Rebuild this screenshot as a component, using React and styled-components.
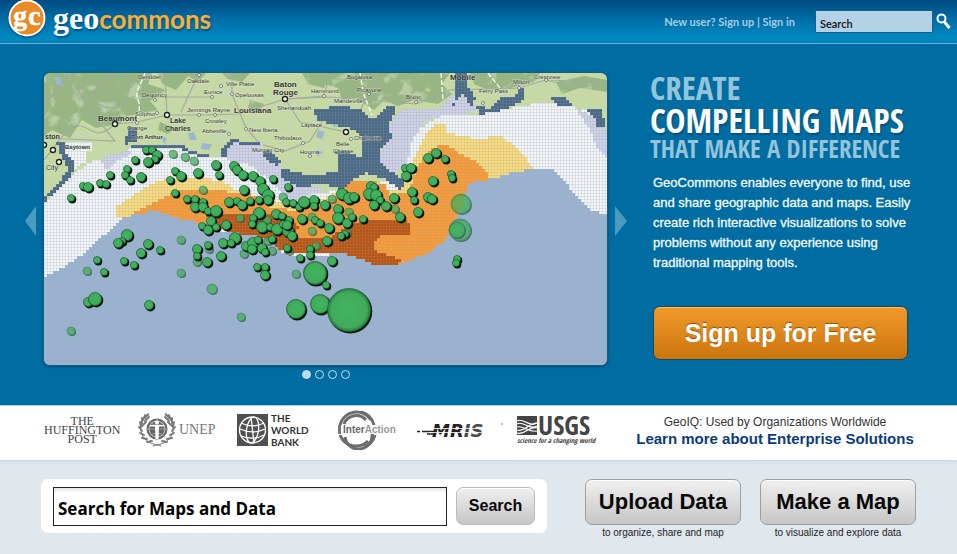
import React from "react";
import styled, { createGlobalStyle } from "styled-components";

const sans = `"Liberation Sans", Arial, sans-serif`;
const humanist = `"Lato", "Open Sans", sans-serif`;
const narrow = `"Open Sans Condensed", "Roboto Condensed", "Liberation Sans Narrow", "DejaVu Sans Condensed", sans-serif`;

const GlobalStyle = createGlobalStyle`
  *, *::before, *::after { box-sizing: border-box; }
  html, body { margin: 0; background: #e0e8ee; }
  body { font-family: ${sans}; color: #111; min-height: 100vh; }
  button, input { font: inherit; }
  button { cursor: pointer; }
  a { color: inherit; text-decoration: none; }
`;

/* ---------- header ---------- */

const Header = styled.header`
  display: flex;
  align-items: center;
  justify-content: space-between;
  height: 44px;
  padding: 0 6px 0 8px;
  background: linear-gradient(#004a80 0%, #006aa3 40%, #0089c0 88%, #0084b9 100%);
  border-bottom: 1px solid #6cabd6;
`;

const Brand = styled.a`
  display: flex;
  align-items: flex-start;
  height: 43px;
  gap: 7px;
`;

const BrandMark = styled.svg`
  display: block;
  filter: drop-shadow(0 1px 1px #00406a);
`;

const Wordmark = styled.span`
  font: 700 26px/38px ${humanist};
  color: #fcae34;
  text-shadow: 1px 2px 2px #005480;
`;

const WordmarkGeo = styled.span`
  font: 700 32px/34px "Liberation Serif", serif;
  color: #fff;
`;

const HeaderTools = styled.div`
  display: flex;
  align-items: center;
  gap: 20px;
`;

const AccountLinks = styled.nav`
  font: 700 11px/16px ${humanist};
  color: #a7cde3;
`;

const HeaderSearch = styled.form`
  display: flex;
  align-items: center;
  gap: 3px;
`;

const HeaderInput = styled.input`
  width: 118px;
  height: 23px;
  padding: 3px 4px 0;
  border: 1px solid #1d5f8c;
  border-radius: 1px;
  background: #b3d2e6;
  color: #111;
  font: 600 11px/16px ${humanist};
`;

const IconButton = styled.button`
  display: flex;
  padding: 0;
  border: 0;
  background: none;
`;

/* ---------- hero ---------- */

const Hero = styled.main`
  display: grid;
  grid-template-columns: 11px minmax(0, 1fr) 12px 323px;
  column-gap: 7px;
  padding: 28px 0 18px 25px;
  background: #006da2;
  border-bottom: 1px solid #a8cfe2;
`;

const Arrow = styled.button`
  align-self: center;
  display: flex;
  height: 30px;
  margin-bottom: 18px;
  padding: 0;
  border: 0;
  background: none;
  color: #4c9abf;
`;

const Carousel = styled.section`
  display: flex;
  flex-direction: column;
  align-items: center;
`;

const MapFrame = styled.div`
  width: 100%;
  overflow: hidden;
  border: 1px solid #185c82;
  border-radius: 7px;
  box-shadow: 0 1px 3px #004a75;
`;

const MapArt = styled.svg`
  display: block;
  width: 100%;
  height: auto;
`;

const Dots = styled.div`
  display: flex;
  gap: 4px;
  padding: 4px 0 8px;
`;

const Dot = styled.button`
  width: 9px;
  height: 9px;
  padding: 0;
  border: 1px solid #c5dfec;
  border-radius: 50%;
  background: ${(p) => (p.$active ? "#b9d9e9" : "transparent")};
`;

const Pitch = styled.section`
  padding: 0 40px 0 16px;
`;

const Headline = styled.h1`
  margin: 0;
  font-family: ${narrow};
  font-weight: 700;
  color: #94c3da;
  white-space: nowrap;
`;

const HeadlineRow = styled.span`
  display: block;
  font-size: ${(p) => p.$size}px;
  line-height: ${(p) => p.$line}px;
  color: ${(p) => (p.$strong ? "#fff" : "inherit")};
  text-shadow: ${(p) => (p.$strong ? "1px 2px 2px #00507c" : "none")};
`;

const Blurb = styled.p`
  margin: 13px 0 33px 3px;
  color: #f4fafd;
  font: 13px/20px ${sans};
  -webkit-text-stroke: 0.3px #f4fafd;
  white-space: nowrap;
`;

const SignUp = styled.button`
  width: 255px;
  height: 54px;
  margin-left: 3px;
  border: 1px solid #20465a;
  border-radius: 7px;
  background: linear-gradient(#f19a29, #cb750f);
  box-shadow: inset 0 1px 0 #f8bd6e;
  color: #fff;
  font: 700 25px/30px ${sans};
  text-shadow: 0 -1px 1px #8f5108;
`;

/* ---------- partners ---------- */

const Partners = styled.section`
  display: grid;
  grid-template-columns: minmax(0, 549fr) minmax(0, 364fr);
  align-items: start;
  height: 55px;
  padding-left: 44px;
  background: #fff;
  border-bottom: 1px solid #c9dce5;
`;

const LogoRow = styled.div`
  display: grid;
  grid-template-columns: 94fr 99fr 100fr 80fr 98fr 78fr;
  align-items: start;
  color: #555;
`;

const Logo = styled.div`
  display: flex;
  align-items: center;
  gap: 3px;
  min-width: 0;
  height: 48px;
  white-space: nowrap;
`;

const HuffText = styled.span`
  font: 12px/9px "Liberation Serif", serif;
  color: #444;
  text-align: center;
`;

const UnepText = styled.span`
  font: 14px/16px "Liberation Serif", serif;
  color: #777;
`;

const BankText = styled.span`
  font: 700 10px/12px ${humanist};
  color: #333;
`;

const LogoArt = styled.svg`
  display: block;
  flex: none;
`;

const Enterprise = styled.div`
  padding: 8px 0 0;
  text-align: center;
  font: 12px/16px ${sans};
  color: #333;
  white-space: nowrap;
`;

const EnterpriseLink = styled.a`
  display: block;
  color: #0c3a7d;
  font: 700 15px/17px ${sans};
`;

/* ---------- actions ---------- */

const Actions = styled.section`
  display: flex;
  align-items: flex-start;
  gap: 38px;
  padding: 18px 41px 16px;
  background: linear-gradient(#d5e1e8, #e0e8ee 5px);
`;

const SearchPanel = styled.form`
  display: flex;
  flex: 1;
  gap: 9px;
  padding: 8px 12px 7px;
  border-radius: 7px;
  background: #fff;
`;

const SearchInput = styled.input`
  flex: 1;
  min-width: 0;
  height: 39px;
  padding: 3px 4px 0;
  border: 1px solid #222;
  border-radius: 0;
  background: linear-gradient(#e2e2e2, #fff 5px);
  color: #000;
  font: 700 17px/24px "Open Sans", "Noto Sans", sans-serif;
`;

const GreyButton = styled.button`
  width: ${(p) => (p.$large ? 156 : 79)}px;
  height: ${(p) => (p.$large ? 46 : 38)}px;
  padding: 0;
  border: 1px solid ${(p) => (p.$large ? "#999fa3" : "#bbb")};
  border-radius: 7px;
  background: linear-gradient(#f0f0f0, #c6c6c6);
  box-shadow: inset 0 1px 0 #fff;
  color: #080808;
  font: 700 ${(p) => (p.$large ? 22 : 16)}px/24px ${sans};
  white-space: nowrap;
`;

const ActionGroup = styled.div`
  display: flex;
  gap: 19px;
`;

const Action = styled.div`
  display: flex;
  flex-direction: column;
  align-items: center;
  gap: 1px;
  font: 10px/14px ${sans};
  color: #222;
`;

/* ---------- map data ---------- */

const MAP = { x: 44, y: 73, w: 563, h: 292 };
const CELL = 3;

const layers = [
  ["#f3f5f9", "44,203 54,192 70,176 86,163 102,157 124,152 134,145 178,144 200,154 228,158 250,165 285,178 300,196 360,186 402,178 404,150 418,128 440,116 478,114 506,108 545,101 590,110 607,135 607,370 44,370"],
  ["#f3f5f9", "64,143 92,143 90,152 84,150 86,160 74,168 66,156"],
  ["#d0d2e7", "100,158 136,148 128,156 112,162 110,170 104,168"],
  ["#d0d2e7", "222,154 232,140 262,143 264,150 276,158 282,168 282,176 300,186 322,186 322,190 300,198 290,206 280,190 262,174 246,162 234,164"],
  ["#d0d2e7", "378,163 382,145 392,120 400,110 438,108 455,92 472,100 476,112 440,116 426,120 412,138 406,164 392,176"],
  ["#d0d2e7", "575,108 592,116 607,132 607,157 598,150 590,130"],
  ["#4a6986", "313,109 328,109 330,105 350,105 352,109 362,109 372,119 388,106 396,106 388,127 392,138 380,148 380,162 388,170 402,178 414,187 402,191 384,178 366,172 352,180 345,194 336,187 322,183 298,187 282,178 282,170 290,170 312,176 338,170 336,152 346,150 362,158 360,135 350,128 318,120"],
  ["#4a6986", "455,73 468,73 468,86 476,98 470,106 462,93 452,106 456,92"],
  ["#4a6986", "474,104 490,108 500,98 516,95 518,88 524,88 524,100 508,108 480,114"],
  ["#4a6986", "550,96 566,97 572,106 560,106"],
  ["#4a6986", "583,108 600,108 606,126 597,126 592,114"],
  ["#4a6986", "128,128 137,128 137,141 124,144"],
  ["#4a6986", "57,143 64,143 66,152 72,160 74,170 60,188 46,198 44,203 44,195 60,180 68,168 62,158"],
  ["#4a6986", "130,144 180,143 190,150 208,155 208,158 188,152 176,147 130,147"],
  ["#4a6986", "219,156 224,144 234,138 240,138 228,148 226,158"],
  ["#4a6986", "238,142 260,142 262,146 240,146"],
  ["#4a6986", "262,152 272,152 280,162 276,166 266,158"],
  ["#fbdc7d", "117,216 116,206 132,196 146,186 166,178 192,176 220,180 240,192 268,198 292,206 318,200 346,188 400,190 413,158 425,134 436,123 446,124 446,132 474,138 500,136 518,148 526,158 533,170 490,180 464,188 300,230 130,222"],
  ["#fb9b34", "126,217 142,208 158,200 176,191 216,190 250,193 270,206 292,210 320,204 336,196 350,182 366,180 386,184 388,196 408,192 416,168 428,150 438,145 450,146 462,154 478,162 487,172 487,181 466,184 466,202 454,228 444,240 430,252 412,259 398,264 372,260 340,254 290,250 250,232 180,220"],
  ["#bd540e", "205,213 250,212 284,216 298,226 290,236 330,238 344,226 366,218 408,221 411,234 382,233 375,241 375,250 402,260 394,265 372,263 350,256 340,254 288,254 258,238 232,232 212,224"],
  ["#9ab2cd", "44,277 60,269 84,253 104,234 120,219 136,213 156,211 170,215 184,220 206,222 218,230 240,233 262,237 276,247 286,254 310,255 345,253 362,259 374,264 400,263 414,258 430,252 446,238 452,224 464,202 466,183 488,179 510,173 530,169 554,169 562,177 574,194 590,210 607,214 607,370 44,370"],
].map(([fill, pts]) => [fill, pts.split(" ").map((p) => p.split(",").map(Number))]);

function inside(x, y, poly) {
  let hit = false;
  for (let i = 0, j = poly.length - 1; i < poly.length; j = i++) {
    const [xi, yi] = poly[i];
    const [xj, yj] = poly[j];
    if (yi > y !== yj > y && x < ((xj - xi) * (y - yi)) / (yj - yi) + xi) hit = !hit;
  }
  return hit;
}

/* Each zone is drawn as runs of square cells, which gives it a stepped edge. */
function buildCells() {
  const paths = {};
  for (let y = MAP.y; y < MAP.y + MAP.h; y += CELL) {
    let start = MAP.x;
    let last = null;
    for (let x = MAP.x; x <= MAP.x + MAP.w + CELL; x += CELL) {
      let fill = null;
      if (x < MAP.x + MAP.w) {
        for (const [color, poly] of layers) if (inside(x + 1, y + 1, poly)) fill = color;
      }
      if (fill !== last || x > MAP.x + MAP.w) {
        if (last) paths[last] = (paths[last] || "") + `M${start} ${y}H${x}V${y + CELL}H${start}Z`;
        start = x;
        last = fill;
      }
    }
  }
  return Object.entries(paths);
}

const cells = buildCells();

const parse = (s) => s.trim().split(/\s+/).map((p) => p.split(",").map(Number));

const solidBubbles = parse(`
146,150,4 152,150,4 157,155,5 155,159,4 148,162,5 135,160,4 127,169,4 110,175,4 125,175,4 130,180,4 141,177,5
83,186,4 88,187,5 100,183,4 106,184,4 71,198,4 175,171,4 170,180,4 181,176,5 198,173,5 175,193,4
216,165,5 219,175,4 234,166,5 237,170,5 243,175,5 253,176,5 260,181,5 273,179,4 288,187,4 244,190,5 263,189,6 268,195,6 268,200,5
187,199,4 195,199,4 203,202,4 195,207,5 203,207,5 208,211,4 216,211,6 229,202,5 237,201,4 242,205,5 250,201,4 259,200,4
286,202,4 293,203,4 299,207,4 304,202,6 314,200,5 314,206,4 325,205,5 342,194,6 349,198,6 354,197,5
371,186,5 374,187,4 369,194,6 376,195,6 380,200,4 374,205,5 386,206,5 394,198,5 412,192,5 414,200,4 428,197,5 432,199,5 418,212,5 400,217,5
405,168,4 411,168,5 406,176,5 428,158,5 436,153,5 445,159,4 451,174,4 452,178,4 433,181,5
259,213,6 253,218,4 252,224,4 262,227,6 270,227,4 276,214,5 282,216,4 289,220,4 277,229,6 283,224,4 288,231,6 287,225,5 292,236,5
302,219,5 315,220,4 320,223,4 329,228,5 338,209,5 338,218,6 347,223,5 352,217,4 363,219,4 345,234,4 341,236,4 327,241,5
211,221,5 202,226,4 208,230,5 216,227,4 226,225,5 235,238,6 223,243,5 231,243,4 246,246,5 253,243,6 258,240,4 252,249,5 262,248,5 265,252,4 272,239,4 287,248,4
197,249,5 197,256,4 207,262,5 208,245,4 221,256,5 310,249,4 310,255,4 300,258,4 332,261,5
257,267,4 265,267,4 265,275,5 148,244,5 141,253,5 160,250,4 127,235,6 122,241,4 118,243,5 97,260,4 104,272,4 124,261,4 134,265,4
149,305,5 88,302,5 95,299,7 315,273,12 326,285,4 296,309,10 320,304,10 349,310,22 457,259,4 456,263,4
`);

const paleBubbles = parse(`
173,154,4 185,157,4 194,161,4 203,190,4 283,197,4 332,199,4 240,218,4 267,220,4 289,251,4 312,217,4 312,231,4
349,212,4 395,209,4 347,233,4 268,241,4 244,254,4 209,249,4 197,262,4 181,240,4 87,271,4 181,273,4 212,289,5 241,317,4 71,331,4
296,274,4 272,251,4 316,246,4 461,204,10 460,230,11 457,230,8
`);

const labels = [
  ["Beaumont", 98, 121, 8, 1], ["Louisiana", 234, 113, 8, 1], ["Baton", 274, 87, 8, 1], ["Rouge", 273, 95, 8, 1],
  ["Lake", 170, 123, 7, 1], ["Charles", 165, 131, 7, 1], ["Oakdale", 187, 83, 6], ["Ville Platte", 226, 86, 6],
  ["Eunice", 204, 94, 6], ["Opelousas", 235, 97, 6], ["Dequincy", 142, 97, 6], ["Sulphur", 135, 116, 6],
  ["Jennings Rayne", 187, 112, 6], ["Crowley", 205, 123, 6], ["Abbeville", 202, 133, 6], ["New Iberia", 249, 132, 6],
  ["Thibodaux", 274, 140, 6], ["Morgan City", 252, 152, 6], ["Houma", 300, 154, 6], ["Shenandoah", 277, 110, 6],
  ["Hammond", 311, 93, 6], ["Mandeville", 334, 103, 6], ["Picayune", 357, 92, 6], ["Biloxi", 406, 99, 6],
  ["Mobile", 450, 80, 8, 1], ["Ferry Pass", 479, 93, 6], ["Milton", 513, 84, 6], ["Crestview", 534, 79, 6],
  ["Laplace", 301, 127, 6], ["Chalmette", 354, 140, 6], ["Belle", 336, 146, 6], ["Chasse", 333, 153, 6],
  ["Orange", 127, 130, 6], ["Port Arthur", 131, 139, 6, 1], ["Baytown", 65, 149, 6, 1], ["ston", 45, 139, 7, 1],
  ["City", 46, 170, 7], ["Deridder", 138, 79, 6], ["Bogalusa", 347, 79, 6],
];

const towns = parse("115,124,2 167,115,2 285,99,2 346,132,2 44,145,2 53,150,2 59,162,2 221,86,1 232,94,1 212,97,1 155,100,1 157,113,1 199,115,1 215,115,1 229,134,1 246,129,1 303,143,1 310,156,1 324,96,1 369,94,1 416,102,1 483,103,1 519,88,1 546,80,1 137,123,1 351,139,1 199,75,1");

const patches = [
  "44,73 152,73 148,84 166,90 150,101 158,110 128,116 120,124 96,128 82,120 70,138 52,130 44,136",
  "158,73 206,73 198,82 188,76 176,90 162,84",
  "330,73 450,73 442,84 452,94 438,104 414,100 398,106 384,100 374,110 356,98 342,100 338,88 324,84",
  "302,73 330,73 324,88 308,84",
  "470,73 540,73 534,82 510,88 488,90 474,84",
  "556,82 584,76 607,80 607,92 580,88 562,94",
  "222,73 250,73 242,82 228,79", "160,122 174,128 168,134 158,130", "250,100 264,104 258,112 248,108",
];

const roads = [
  "M44 160C60 140 68 125 80 126S95 142 115 124L137 122L167 115L200 115L238 114L285 99L330 97L416 104L450 90L519 88L546 80L607 82",
  "M68 73C60 90 48 98 44 104M118 73C88 84 88 106 110 108S130 86 126 73", "M44 138L115 141L90 110L68 73",
  "M167 115L165 73M181 112L199 73M212 97L155 97M232 94L232 73M232 94L246 128L260 144L285 151L310 141L324 118",
  "M285 99L300 122L346 132M285 99L324 96L330 73M369 94L383 73M369 94L350 128M546 80L575 87L600 84",
];

function MapPicture() {
  return (
    <MapArt viewBox={`${MAP.x} ${MAP.y} ${MAP.w} ${MAP.h}`} role="img" aria-label="Bubble map of the Gulf of Mexico coast">
      <defs>
        <pattern id="mesh" width="3" height="3" patternUnits="userSpaceOnUse" x="44" y="73">
          <path d="M0 .5H3M.5 0V3" stroke="#8d99a5" strokeOpacity=".2" strokeWidth="1" />
        </pattern>
        <filter id="terrain" x="0" y="0" width="100%" height="100%">
          <feTurbulence type="fractalNoise" baseFrequency=".07" numOctaves="3" seed="8" />
          <feColorMatrix values="0 0 0 0 .55  0 0 0 0 .68  0 0 0 0 .47  6 0 0 0 -3.5" />
        </filter>
        <radialGradient id="bubble">
          <stop offset="0" stopColor="#43b25f" />
          <stop offset=".82" stopColor="#40ac5b" />
          <stop offset="1" stopColor="#257c40" />
        </radialGradient>
      </defs>
      <rect x="44" y="73" width="563" height="292" fill="#c6d9a4" />
      <g fill="#98b683">
        {patches.map((p) => <polygon key={p} points={p} />)}
      </g>
      <rect x="44" y="73" width="563" height="135" filter="url(#terrain)" opacity=".7" />
      <g fill="#9bb9ce">
        <path d="M54 77l6 0 4 10-7-2zM188 133l6-1 3 8-7 0zM202 143l10 1-3 6-8-1zM330 121l15-2 4 6-15 2zM318 130l7 2-3 7-6-2zM315 150l8 2-5 5zM240 150l8 3-5 4zM160 136l7 2-2 7z" />
      </g>
      <g fill="none" stroke="#a3aaa0" strokeWidth="1.2">
        {roads.map((d) => <path key={d} d={d} />)}
      </g>
      <path d="M145 73C141 85 134 92 138 100S136 115 138 128M360 73L363 92L372 115M441 73L443 100M488 73L500 88" fill="none" stroke="#f5f8ee" strokeWidth="1.4" strokeDasharray="5 2" />
      <g shapeRendering="crispEdges">
        {cells.map(([fill, d]) => <path key={fill} d={d} fill={fill} />)}
        {cells.filter(([fill]) => fill !== "#9ab2cd").map(([fill, d]) => <path key={fill} d={d} fill="url(#mesh)" />)}
      </g>
      <g fontFamily="Liberation Sans, Arial, sans-serif" fill="#333" stroke="#eef3e2" strokeOpacity=".55" strokeWidth="1" paintOrder="stroke">
        {labels.map(([t, x, y, size, bold]) => (
          <text key={t} x={x} y={y} fontSize={size} fontWeight={bold ? 700 : 400}>{t}</text>
        ))}
      </g>
      {towns.map(([x, y, r]) => (
        <circle key={`${x}-${y}`} cx={x} cy={y} r={r + 0.5} fill="#fff" stroke={r > 1 ? "#222" : "#666"} strokeWidth={r > 1 ? 1.4 : 0.8} />
      ))}
      {paleBubbles.map(([x, y, r]) => (
        <g key={`${x}-${y}-${r}`} opacity=".75">
          <circle cx={x + 1} cy={y + 1} r={r} fill="#334b45" />
          <circle cx={x} cy={y} r={r} fill="url(#bubble)" stroke="#3f7e50" strokeWidth=".8" />
        </g>
      ))}
      {solidBubbles.map(([x, y, r]) => (
        <g key={`${x}-${y}-${r}`}>
          <circle cx={x + 1.3} cy={y + 1.4} r={r} fill="#07150c" />
          <circle cx={x} cy={y} r={r - 0.4} fill="url(#bubble)" stroke="#1c5c31" strokeWidth=".6" />
        </g>
      ))}
    </MapArt>
  );
}

/* ---------- logos ---------- */

const UnepMark = () => (
  <LogoArt width="38" height="36" viewBox="0 0 38 36" aria-hidden="true">
    <circle cx="19" cy="17" r="10.5" fill="#666" />
    <circle cx="19" cy="17" r="8" fill="none" stroke="#ddd" strokeWidth=".8" />
    <path d="M19 6.500V27.500M9 17H29M12 10C16 14 22 14 26 10M12 24C16 20 22 20 26 24" stroke="#bbb" strokeWidth=".6" fill="none" />
    <circle cx="19" cy="10.500" r="2" fill="#fff" />
    <path d="M12 13H26V14.500H21L20.500 27H17.500L17 14.500H12Z" fill="#fff" />
    <g fill="none" stroke="#777" strokeLinecap="round">
      <path d="M11 3C2 7 0 20 7 27C10 31 15 32 23 34M27 3C36 7 38 20 31 27C28 31 23 32 15 34" strokeWidth="1" />
      <path d="M10 2l-3 4M7 3L5 8M4 6v5M2 10l1 5M1 15l3 4M2 21l4 2M4 26l5 1M9 30l5-1M28 2l3 4M31 3l2 5M34 6v5M36 10l-1 5M37 15l-3 4M36 21l-4 2M34 26l-5 1M29 30l-5-1M11 5L7 9M27 5l4 4M8 10l-4 4M30 10l4 4" strokeWidth="1.800" />
    </g>
  </LogoArt>
);

const BankMark = () => (
  <LogoArt width="31" height="32" viewBox="0 0 31 32" aria-hidden="true">
    <rect width="31" height="32" fill="#505050" />
    <g fill="none" stroke="#fff" strokeWidth="1.300">
      <circle cx="15.500" cy="16" r="13" />
      <ellipse cx="15.500" cy="16" rx="6" ry="13" transform="rotate(8 15.500 16)" />
      <path d="M14 3L17 29M3 15C12 19 20 19 28 15M4 9C12 13 19 13 27 9M4 22C12 25 20 25 27 21" />
    </g>
  </LogoArt>
);

const InterActionMark = () => (
  <LogoArt width="62" height="40" viewBox="0 0 62 40" role="img" aria-label="InterAction">
    <g fill="none" stroke="#6d6d6d" strokeWidth="3">
      <path d="M3 15A17 17 0 0 1 34 10" /><path d="M7 14A13 13 0 0 1 29 10" />
      <path d="M3 25A17 17 0 0 0 31 31" /><path d="M8 27A13 13 0 0 0 35 24" />
      <path d="M24 2A18 18 0 0 1 37 15M27 37A18 18 0 0 0 38 25" />
    </g>
    <path d="M1 15H4V24H1Z" fill="#777" />
    <text x="6" y="23" fontFamily="Liberation Sans, Arial" fontSize="10" fontWeight="700" fill="#666">Inter<tspan fill="#999">Action</tspan></text>
  </LogoArt>
);

const MrisMark = () => (
  <LogoArt width="87" height="20" viewBox="0 0 87 20" role="img" aria-label="MRIS">
    <path d="M0 11.500H3M5 11.500H20M10 14H18" stroke="#222" strokeWidth="1.500" />
    <text x="15" y="17" fontFamily="DejaVu Sans, sans-serif" fontSize="18" fontStyle="italic" fontWeight="700" fill="#222">MR<tspan fill="#4a4a4a">IS</tspan></text>
    <path d="M14 8.500H84M12 12.500H84" stroke="#fff" strokeWidth=".800" />
    <circle cx="85" cy="4" r=".8" fill="#777" />
  </LogoArt>
);

const UsgsMark = () => (
  <LogoArt width="84" height="40" viewBox="0 0 84 40" role="img" aria-label="USGS science for a changing world">
    <rect x="2" width="20" height="19" y="6" fill="#444" />
    <path d="M2 11C8 7 14 18 22 13M2 14C8 10 14 21 22 16M2 20C9 23 15 12 22 13M2 23C9 26 15 15 22 18M2 17C8 15 14 23 22 21" stroke="#fff" strokeWidth="1.100" fill="none" />
    <text x="23" y="25" fontFamily="Open Sans Condensed, Roboto Condensed, Liberation Sans" fontSize="27" fontWeight="700" fill="#444">USGS</text>
    <text x="2" y="33" fontFamily="Open Sans Condensed, Roboto Condensed, Liberation Sans" fontSize="7" fontStyle="italic" fontWeight="700" fill="#444">science for a changing world</text>
  </LogoArt>
);

/* ---------- page ---------- */

export default function App() {
  const stop = (e) => e.preventDefault();
  return (
    <>
      <GlobalStyle />
      <Header>
        <Brand href="#home" aria-label="GeoCommons home">
          <BrandMark width="38" height="38" viewBox="0 0 38 38" aria-hidden="true">
            <circle cx="19" cy="18" r="17.500" fill="#e98b27" stroke="#fff" strokeWidth="2" />
            <g fontFamily="Liberation Serif, serif" fontWeight="700" fontSize="28" fill="#fff" stroke="#fff" strokeWidth=".6">
              <text x="5" y="25">g</text>
              <text x="20" y="25">c</text>
            </g>
          </BrandMark>
          <Wordmark><WordmarkGeo>geo</WordmarkGeo>commons</Wordmark>
        </Brand>
        <HeaderTools>
          <AccountLinks>
            New user? <a href="#signup">Sign up</a> | <a href="#signin">Sign in</a>
          </AccountLinks>
          <HeaderSearch onSubmit={stop}>
            <HeaderInput type="text" aria-label="Search" defaultValue="Search" />
            <IconButton type="submit" aria-label="Run search">
              <svg width="15" height="17" viewBox="0 0 15 17" fill="none" stroke="#fff">
                <circle cx="5.500" cy="5.500" r="4" strokeWidth="2" />
                <path d="M8.500 9L13.500 15" strokeWidth="3" />
              </svg>
            </IconButton>
          </HeaderSearch>
        </HeaderTools>
      </Header>

      <Hero>
        <Arrow type="button" aria-label="Previous slide">
          <svg width="11" height="30" viewBox="0 0 11 30"><path d="M11 0V30L0 15Z" fill="currentColor" /></svg>
        </Arrow>
        <Carousel>
          <MapFrame><MapPicture /></MapFrame>
          <Dots>
            {[0, 1, 2, 3].map((i) => (
              <Dot key={i} type="button" $active={i === 0} aria-label={`Slide ${i + 1}`} />
            ))}
          </Dots>
        </Carousel>
        <Arrow type="button" aria-label="Next slide">
          <svg width="12" height="30" viewBox="0 0 12 30"><path d="M0 0V30L12 15Z" fill="currentColor" /></svg>
        </Arrow>
        <Pitch>
          <Headline>
            <HeadlineRow $size={33} $line={32}>CREATE</HeadlineRow>
            <HeadlineRow $size={34} $line={32} $strong>COMPELLING MAPS</HeadlineRow>
            <HeadlineRow $size={25} $line={24}>THAT MAKE A DIFFERENCE</HeadlineRow>
          </Headline>
          <Blurb>
            GeoCommons enables everyone to find, use<br />
            and share geographic data and maps. Easily<br />
            create rich interactive visualizations to solve<br />
            problems without any experience using<br />
            traditional mapping tools.
          </Blurb>
          <SignUp type="button">Sign up for Free</SignUp>
        </Pitch>
      </Hero>

      <Partners>
        <LogoRow>
          <Logo><HuffText>THE<br />HUFFINGTON<br />POST</HuffText></Logo>
          <Logo><UnepMark /><UnepText>UNEP</UnepText></Logo>
          <Logo><BankMark /><BankText>THE<br />WORLD<br />BANK</BankText></Logo>
          <Logo><InterActionMark /></Logo>
          <Logo><MrisMark /></Logo>
          <Logo><UsgsMark /></Logo>
        </LogoRow>
        <Enterprise>
          GeoIQ: Used by Organizations Worldwide
          <EnterpriseLink href="#enterprise">Learn more about Enterprise Solutions</EnterpriseLink>
        </Enterprise>
      </Partners>

      <Actions>
        <SearchPanel onSubmit={stop}>
          <SearchInput type="text" aria-label="Search for Maps and Data" defaultValue="Search for Maps and Data" />
          <GreyButton type="submit">Search</GreyButton>
        </SearchPanel>
        <ActionGroup>
          <Action><GreyButton type="button" $large>Upload Data</GreyButton>to organize, share and map</Action>
          <Action><GreyButton type="button" $large>Make a Map</GreyButton>to visualize and explore data</Action>
        </ActionGroup>
      </Actions>
    </>
  );
}
